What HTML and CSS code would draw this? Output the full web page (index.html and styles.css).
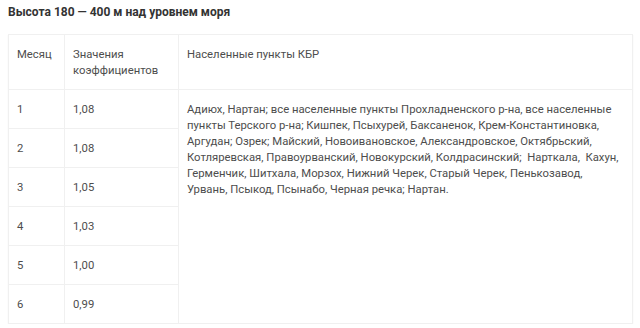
FILE: index.html
```html
<!DOCTYPE html>
<html lang="ru">
<head>
<meta charset="utf-8">
<link rel="stylesheet" href="styles.css">
</head>
<body>
<h3 class="title">Высота 180 — 400 м над уровнем моря</h3>
<table class="coef">
  <colgroup>
    <col class="c1"><col class="c2"><col class="c3">
  </colgroup>
  <tr class="head">
    <td>Месяц</td>
    <td>Значения<br>коэффициентов</td>
    <td>Населенные пункты КБР</td>
  </tr>
  <tr>
    <td>1</td><td>1,08</td>
    <td class="places" rowspan="6">Адиюх, Нартан; все населенные пункты Прохладненского р-на, все населенные пункты Терского р-на; Кишпек, Псыхурей, Баксаненок, Крем-Константиновка, Аргудан; Озрек; Майский, Новоивановское, Александровское, Октябрьский, Котляревская, Правоурванский, Новокурский, Колдрасинский;&nbsp; Нарткала,&nbsp; Кахун, Герменчик, Шитхала, Морзох, Нижний Черек, Старый Черек, Пенькозавод, Урвань, Псыкод, Псынабо, Черная речка; Нартан.</td>
  </tr>
  <tr><td>2</td><td>1,08</td></tr>
  <tr><td>3</td><td>1,05</td></tr>
  <tr><td>4</td><td>1,03</td></tr>
  <tr><td>5</td><td>1,00</td></tr>
  <tr><td>6</td><td>0,99</td></tr>
</table>
</body>
</html>
```
FILE: styles.css
```css
body {
  margin: 0;
  padding: 4px 8px 0;
  font-family: Roboto, "Liberation Sans", sans-serif;
  background: #fff;
}
.title {
  margin: 0 0 13px;
  font-size: 12px;
  line-height: 17px;
  font-weight: 700;
  color: #333;
}
.coef {
  width: 625px;
  border-collapse: collapse;
  font-size: 11.3px;
  line-height: 16px;
  color: #4d4d4d;
  border: 1px solid #f0f0f0;
  box-shadow: 0 1px 1px #eaeaea;
}
.c1 { width: 56px; }
.c2 { width: 114px; }
.coef td {
  border: 1px solid #f0f0f0;
  padding: 12px 8px 10px;
  vertical-align: top;
  text-align: left;
}
```
